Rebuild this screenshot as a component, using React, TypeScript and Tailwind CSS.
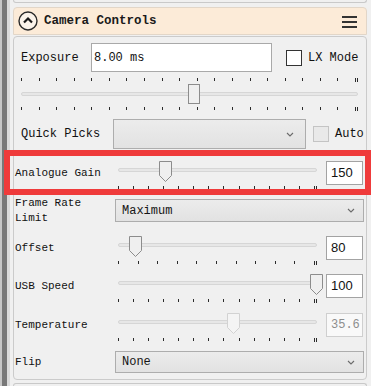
import React from "react"

const labelFont = "font-['Liberation_Mono',monospace]"

// tick row under / above a slider
function Ticks({ count, className = "" }: { count: number; className?: string }) {
  return (
    <div className={`flex justify-between h-[4px] ${className}`}>
      {Array.from({ length: count - 1 }).map((_, i) => (
        <span key={i} className="w-px h-[3px] bg-[#2b2b2b]" />
      ))}
      <span className="flex gap-px">
        <span className="w-px h-[4px] bg-[#2b2b2b]" />
        <span className="w-px h-[4px] bg-[#2b2b2b]" />
      </span>
    </div>
  )
}

function Thumb({ disabled }: { disabled?: boolean }) {
  return (
    <svg width="13" height="21" viewBox="0 0 13 21">
      <path
        d="M0.5 0.5H12.5V14.5L6.5 20.5L0.5 14.5Z"
        fill={disabled ? "#f4f4f4" : "#efefef"}
        stroke={disabled ? "#d2d2d2" : "#8c8c8c"}
      />
    </svg>
  )
}

function Chevron() {
  return (
    <svg width="8" height="5" viewBox="0 0 8 5">
      <path d="M1 1L4 4L7 1" fill="none" stroke="#6b6b6b" strokeWidth="1.1" />
    </svg>
  )
}

function Select({ value, className = "" }: { value: string; className?: string }) {
  return (
    <div
      className={`shrink-0 flex items-center justify-between pl-[6px] pr-[8px] border border-[#adadad] bg-gradient-to-b from-[#ececec] to-[#e2e2e2] text-[12px] text-[#151515] ${labelFont} ${className}`}
    >
      <span>{value}</span>
      <Chevron />
    </div>
  )
}

type SliderProps = {
  label: string
  value: string
  left: number
  ticks: number
  disabled?: boolean
  monoValue?: boolean
}

function SliderRow({ label, value, left, ticks, disabled, monoValue }: SliderProps) {
  return (
    <div className="flex h-[30px] pl-px">
      <div className="shrink-0 w-[103px] h-[25px] flex items-center text-[11px] text-[#111]">{label}</div>
      <div className="shrink-0 relative w-[199px] h-[30px]">
        <div className="mt-[7px] h-[4px] rounded-[2px] border border-[#d6d6d6] bg-[#e7e7e7]" />
        <div className="absolute top-0" style={{ left }}>
          <Thumb disabled={disabled} />
        </div>
        <Ticks count={ticks} className="mt-[14px]" />
      </div>
      <div
        className={`shrink-0 ml-[9px] w-[37px] h-[24px] flex items-center pl-[4px] border ${
          disabled
            ? "border-[#cfcfcf] bg-[#f9f9f9] text-[#8d8d8d]"
            : "border-[#a3a3a3] bg-white text-[#111]"
        } ${monoValue ? `text-[12px] ${labelFont}` : "text-[13px] font-['Liberation_Sans',Arial,sans-serif]"}`}
      >
        {value}
      </div>
    </div>
  )
}

export default function App() {
  return (
    <div className={`w-[371px] h-[386px] flex bg-[#f0f0f0] overflow-hidden ${labelFont}`}>
      {/* splitter on the left */}
      <div className="w-[10px] flex shrink-0">
        <span className="w-[2px] bg-[#c6c6c6]" />
        <span className="w-[5px] bg-[#787878]" />
        <span className="w-[3px] bg-[#dadada]" />
      </div>

      <div className="w-[354px] ml-[3px] flex flex-col shrink-0">
        {/* previous panel bottom edge */}
        <div className="h-[3px] border-x border-b border-[#c9c9c9] rounded-b-[3px]" />

        {/* header */}
        <div className="mt-[4px] h-[28px] flex items-center pl-[4px] pr-[9px] rounded-t-[4px] border border-[#e2d6c8] bg-[#fcebd8]">
          <svg width="20" height="20" viewBox="0 0 20 20">
            <circle cx="10" cy="10" r="9" fill="#fbf3ea" stroke="#2a2a2a" strokeWidth="1.4" />
            <path d="M6 11.5L10 7.5L14 11.5" fill="none" stroke="#1a1a1a" strokeWidth="2.2" />
          </svg>
          <span className="ml-[6px] text-[12.5px] font-bold text-[#1a1a1a]">Camera Controls</span>
          <svg className="ml-auto" width="15" height="13" viewBox="0 0 15 13">
            <rect x="0" y="1" width="15" height="2" fill="#333" />
            <rect x="0" y="6" width="15" height="2" fill="#333" />
            <rect x="0" y="11" width="15" height="2" fill="#333" />
          </svg>
        </div>

        {/* controls panel */}
        <div className="mt-px h-[344px] rounded-[4px] border border-[#cbcbcb] bg-[#f0f0f0] flex flex-col">
          <div className="pl-[7px] pr-[8px] flex flex-col">
            <div className="mt-[6px] h-[29px] flex items-center text-[12px] text-[#111] whitespace-nowrap">
              <span className="shrink-0 w-[70px]">Exposure</span>
              <div className="shrink-0 w-[181px] h-[29px] flex items-center pl-[2px] border border-[#a9a9a9] bg-white">
                8.00 ms
              </div>
              <span className="shrink-0 ml-[14px] w-[16px] h-[16px] border border-[#333] bg-white" />
              <span className="shrink-0 ml-[6px]">LX Mode</span>
            </div>

            <Ticks count={20} className="mt-[6px]" />
            <div className="relative mt-[2px] h-[20px]">
              <div className="pt-[8px]">
                <div className="h-[4px] rounded-[2px] border border-[#d6d6d6] bg-[#e7e7e7]" />
              </div>
              <div className="absolute top-0 left-[167px] w-[12px] h-[20px] border border-[#8c8c8c] bg-[#efefef]" />
            </div>
            <Ticks count={20} className="mt-[3px]" />

            <div className="mt-[8px] h-[30px] flex items-center text-[12px] text-[#111] whitespace-nowrap">
              <span className="shrink-0 w-[92px]">Quick Picks</span>
              <Select value="" className="w-[193px] h-[30px] pr-[11px]" />
              <span className="shrink-0 ml-[7px] w-[16px] h-[16px] border border-[#c4c4c4] bg-[#e9e9e9]" />
              <span className="shrink-0 ml-[6px]">Auto</span>
            </div>
          </div>

          <div className="mt-[12px] relative pr-[3px]">
            <SliderRow label="Analogue Gain" value="150" left={41} ticks={14} />
            <div className="absolute -top-[11px] -left-[10px] -right-[5px] -bottom-[4px] border-[6px] border-[#ef3b3b] z-10" />
          </div>

          <div className="mt-[8px] h-[23px] flex items-center pl-px pr-[2px]">
            <div className="shrink-0 w-[100px] text-[11px] leading-[15px] text-[#111]">
              Frame Rate
              <br />
              Limit
            </div>
            <Select value="Maximum" className="w-[249px] h-[23px]" />
          </div>

          <div className="mt-[14px] pr-[3px]">
            <SliderRow label="Offset" value="80" left={11} ticks={11} />
          </div>
          <div className="mt-[8px] pr-[3px]">
            <SliderRow label="USB Speed" value="100" left={192} ticks={14} />
          </div>
          <div className="mt-[9px] pr-[3px]">
            <SliderRow label="Temperature" value="35.6" left={109} ticks={14} disabled monoValue />
          </div>

          <div className="mt-[8px] h-[22px] flex items-center pl-px pr-[2px]">
            <div className="shrink-0 w-[100px] text-[11px] text-[#111]">Flip</div>
            <Select value="None" className="w-[249px] h-[22px]" />
          </div>
        </div>

        {/* next panel top edge */}
        <div className="mt-[3px] flex-1 border-x border-t border-[#c9c9c9] rounded-t-[3px]" />
      </div>
    </div>
  )
}
